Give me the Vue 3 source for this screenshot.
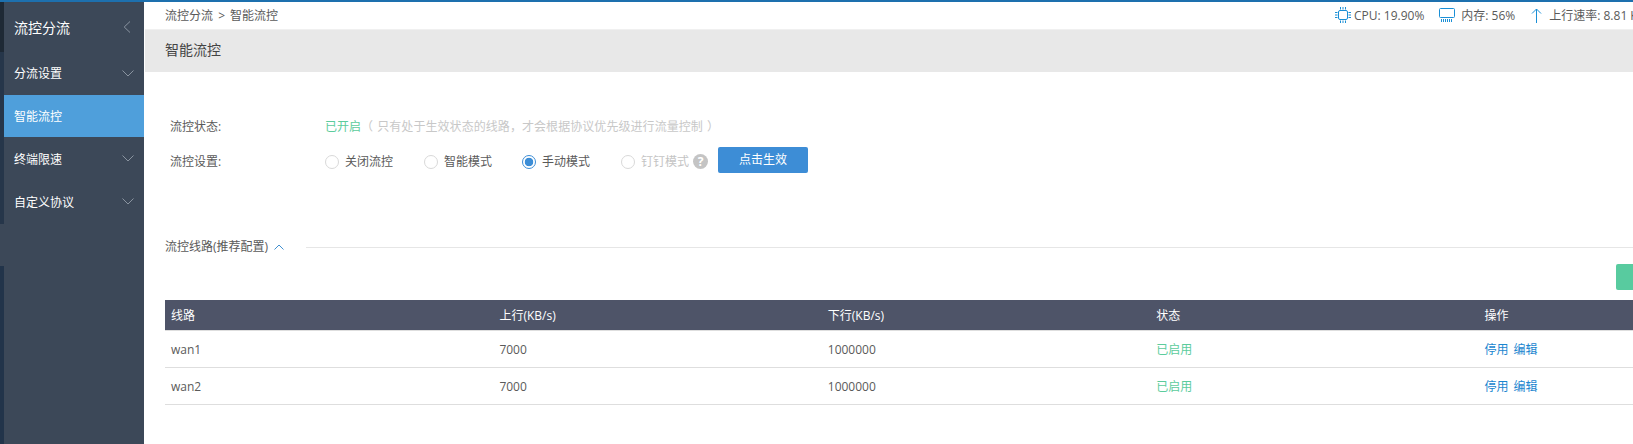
<script setup>
const menu = [
  { label: '分流设置' },
  { label: '智能流控', active: true },
  { label: '终端限速' },
  { label: '自定义协议' },
]
const lines = [
  { name: 'wan1', up: '7000', down: '1000000' },
  { name: 'wan2', up: '7000', down: '1000000' },
]
const modes = [
  { label: '关闭流控' },
  { label: '智能模式', short: true },
  { label: '手动模式' , on: true },
  { label: '钉钉模式', off: true },
]
</script>

<template>
  <div class="page">
    <div class="topline"></div>
    <div class="body">
      <aside class="side">
        <div class="strip">
          <i class="s1"></i><i class="s2"></i><i class="s3"></i><i class="s4"></i>
        </div>
        <div class="nav">
          <div class="brand">
            <span>流控分流</span>
            <svg width="8" height="12" viewBox="0 0 8 12"><path d="M7 .5 1.200 6 7 11.500" fill="none" stroke="#8a94a0" stroke-width="1"/></svg>
          </div>
          <div v-for="m in menu" :key="m.label" class="item" :class="{ active: m.active }">
            <span>{{ m.label }}</span>
            <svg v-if="!m.active" width="12" height="7" viewBox="0 0 12 7"><path d="M.5.5 6 6 11.500.5" fill="none" stroke="#8a94a0" stroke-width="1"/></svg>
          </div>
        </div>
      </aside>
      <main class="main">
        <header class="crumbs">
          <div class="crumb">流控分流 <span class="gt">&gt;</span> 智能流控</div>
          <div class="stats">
            <svg width="18" height="18" viewBox="0 0 18 18" class="ic" fill="none" stroke="#1a8fd6" stroke-width="1">
              <rect x="4.500" y="4.500" width="9" height="9" rx="1.500"/>
              <path d="M6.500 1v2.500M9 1v2.500M11.500 1v2.500M6.500 14.500V17M9 14.500V17M11.500 14.500V17M1 6.500h2.500M1 9h2.500M1 11.500h2.500M14.500 6.500H17M14.500 9H17M14.500 11.500H17"/>
            </svg>
            <span class="t1">CPU: 19.90%</span>
            <svg width="16" height="14" viewBox="0 0 16 14" class="ic mem" fill="none" stroke="#1a8fd6" stroke-width="1">
              <rect x=".5" y=".5" width="15" height="9" rx="1"/>
              <path d="M2.500 11v3M4.500 11v3M6.500 11v3M8.500 11v3M10.500 11v3M12.500 11v3"/>
            </svg>
            <span class="t2">内存: 56%</span>
            <svg width="11" height="15" viewBox="0 0 11 15" class="ic up" fill="none" stroke="#1a8fd6" stroke-width="1">
              <path d="M5.500 15V1M1 5.500 5.500 1 10 5.500"/>
            </svg>
            <span class="t3">上行速率: 8.81 KB/s</span>
          </div>
        </header>
        <div class="title">智能流控</div>
        <section class="form">
          <div class="row">
            <label class="lbl">流控状态:</label>
            <div class="val"><span class="green">已开启</span><span class="hint">（ 只有处于生效状态的线路，才会根据协议优先级进行流量控制 ）</span></div>
          </div>
          <div class="row second">
            <label class="lbl">流控设置:</label>
            <div class="val radios">
              <div v-for="r in modes" :key="r.label" class="radio" :class="{ on: r.on, off: r.off, short: r.short }">
                <i class="dot"></i><span>{{ r.label }}</span>
              </div>
              <span class="help">?</span>
              <button class="apply">点击生效</button>
            </div>
          </div>
        </section>
        <section class="sect">
          <div class="sect-head">
            <span>流控线路(推荐配置)</span>
            <svg width="10" height="6" viewBox="0 0 10 6"><path d="M.5 5.500 5 1l4.500 4.500" fill="none" stroke="#3f8fd0" stroke-width="1"/></svg>
            <div class="rule"></div>
          </div>
          <div class="tools"><span class="add"></span></div>
          <div class="table">
            <div class="tr head">
              <div>线路</div><div>上行(KB/s)</div><div>下行(KB/s)</div><div>状态</div><div>操作</div>
            </div>
            <div v-for="l in lines" :key="l.name" class="tr">
              <div>{{ l.name }}</div>
              <div>{{ l.up }}</div>
              <div>{{ l.down }}</div>
              <div class="green">已启用</div>
              <div class="ops"><a>停用</a><a>编辑</a></div>
            </div>
          </div>
        </section>
      </main>
    </div>
  </div>
</template>

<style>
html, body { margin: 0; overflow: hidden; background: #fff; }
</style>

<style scoped>
.page { width: 1633px; height: 444px; overflow: hidden; font: 12px/1.4 "Open Sans", "Noto Sans CJK SC", sans-serif; color: #5a5a5a; display: flex; flex-direction: column; }
.topline { height: 2px; background: #1d70ae; flex: none; }
.body { flex: 1; display: flex; min-height: 0; }
.side { width: 144px; flex: none; display: flex; background: #3c4858; }
.strip { width: 4px; display: flex; flex-direction: column; }
.strip i { display: block; }
.s1 { height: 50px; background: #1e2935; }
.s2 { height: 172px; background: #26364a; }
.s3 { height: 42px; background: #3c4858; }
.s4 { flex: 1; background: #22344a; }
.nav { flex: 1; color: #fff; }
.brand { height: 50px; display: flex; align-items: center; justify-content: space-between; padding: 0 13px 0 10px; box-sizing: border-box; font-size: 14px; }
.brand span { padding-top: 2px; }
.item { height: 43px; display: flex; align-items: center; justify-content: space-between; padding: 0 10px; box-sizing: border-box; }
.item span { padding-top: 2px; }
.item:nth-child(n+4) span { padding-top: 4px; }
.item.active { background: #4f9fdb; height: 42px; }
.main { flex: 1; min-width: 0; margin-left: 1px; display: flex; flex-direction: column; }
.crumbs { height: 27px; display: flex; justify-content: space-between; align-items: center; padding-left: 20px; white-space: nowrap; }
.crumb { padding-top: 2px; }
.gt { margin: 0 2px; }
.stats { display: flex; align-items: center; width: 299px; flex: none; overflow: hidden; color: #5a5a5a; }
.stats span { padding-top: 2px; }
.ic { flex: none; }
.t1 { margin-left: 2px; }
.mem { margin-left: 15px; }
.t2 { margin-left: 6px; }
.up { margin-left: 16px; }
.t3 { margin-left: 7px; }
.title { height: 43px; background: #e8e8e8; border-top: 1px solid #f0f0f0; box-sizing: border-box; padding-left: 20px; line-height: 40px; font-size: 14px; color: #444; flex: none; }
.form { padding: 43px 0 0 25px; }
.row { display: flex; align-items: center; height: 24px; }
.second { margin-top: 11px; }
.lbl { width: 155px; flex: none; }
.val { display: flex; align-items: center; white-space: nowrap; }
.green { color: #5ccc9c; }
.hint { color: #c8c8c8; word-spacing: 1px; letter-spacing: .06px; }
.radio { display: flex; align-items: center; width: 99px; }
.radio.short { width: 98px; }
.radio span { margin-left: 6px; }
.radio.off { color: #c4c4c4; width: 72px; }
.dot { width: 14px; height: 14px; box-sizing: border-box; border: 1px solid #d9d9d9; border-radius: 50%; flex: none; }
.on .dot { border-color: #3c8dd6; background: radial-gradient(circle, #3c8dd6 0 4px, #fff 4.600px); }
.help { width: 15px; height: 15px; border-radius: 50%; background: #c4c4c4; color: #fff; font: bold 12px/15px "Open Sans", sans-serif; text-align: center; margin-right: 10px; margin-bottom: 2px; }
.apply { width: 90px; height: 26px; background: #3d8dd6; color: #fff; border: 0; border-radius: 2px; font: inherit; padding: 0; margin-bottom: 4px; }
.sect { padding: 0 0 0 20px; margin-top: 63px; }
.sect-head { display: flex; align-items: center; height: 20px; }
.sect-head svg { margin-left: 6px; flex: none; }
.rule { flex: 1; height: 1px; background: #e6e6e6; margin-left: 22px; }
.tools { display: flex; justify-content: flex-end; margin-top: 7px; height: 26px; }
.add { width: 17px; background: #58cb9f; border-radius: 2px 0 0 2px; }
.table { margin-top: 10px; width: 1642px; }
.tr { display: grid; grid-template-columns: repeat(5, 328.400px); height: 37px; align-items: center; border-bottom: 1px solid #dedede; box-sizing: border-box; }
.tr > div { padding-left: 6px; padding-top: 2px; }
.tr.head { height: 31px; background: #4e5468; color: #fff; }
.ops a { color: #1a86cf; margin-right: 5px; }
</style>
